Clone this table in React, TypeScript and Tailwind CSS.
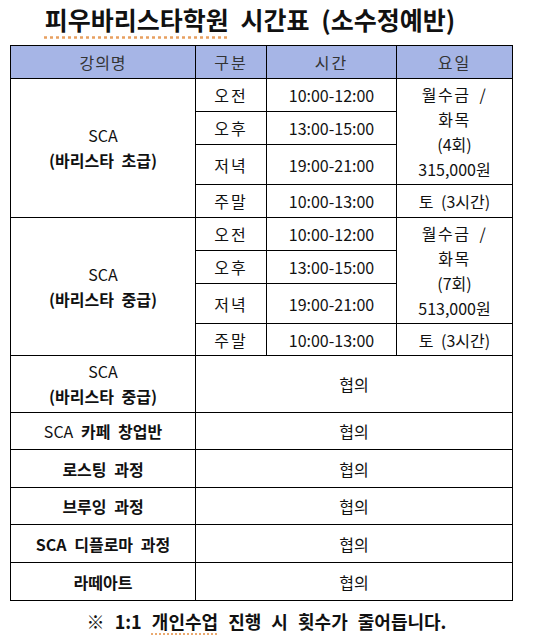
import React from 'react';

const font = { fontFamily: '"Malgun Gothic", "Noto Sans CJK KR", "Noto Sans", sans-serif' };

const cell = 'border border-black text-center align-middle p-0 leading-[20px] [word-spacing:4px]';

interface Slot {
  label: string;
  time: string;
  h: string;
}

const slots: Slot[] = [
  { label: '오전', time: '10:00-12:00', h: 'h-[33px]' },
  { label: '오후', time: '13:00-15:00', h: 'h-[33px]' },
  { label: '저녁', time: '19:00-21:00', h: 'h-[40px]' },
];

// one SCA course block: 4 rows, course name + days cells span the first 3 / 4
const CourseGroup: React.FC<{ level: string; count: string; price: string; last: string }> = ({
  level,
  count,
  price,
  last,
}) => (
  <>
    {slots.map((s, i) => (
      <tr key={s.label} className={s.h}>
        {i === 0 && (
          <td rowSpan={4} className={cell}>
            <div className="leading-[25px] [word-spacing:0]">SCA</div>
            <div className="font-bold leading-[25px]">(바리스타 {level})</div>
          </td>
        )}
        <td className={`${cell} tracking-[2px]`}>{s.label}</td>
        <td className={cell}>{s.time}</td>
        {i === 0 && (
          <td rowSpan={3} className={cell}>
            <div className="leading-[25px] tracking-[1.5px]">월수금 /</div>
            <div className="leading-[25px] tracking-[1.5px]">화목</div>
            <div className="leading-[25px]">({count})</div>
            <div className="leading-[25px]">{price}</div>
          </td>
        )}
      </tr>
    ))}
    <tr className={last}>
      <td className={`${cell} tracking-[2px]`}>주말</td>
      <td className={cell}>10:00-13:00</td>
      <td className={cell}>토 (3시간)</td>
    </tr>
  </>
);

const Row: React.FC<{ h: string; children: React.ReactNode }> = ({ h, children }) => (
  <tr className={h}>
    <td className={cell}>{children}</td>
    <td colSpan={3} className={cell}>협의</td>
  </tr>
);

export default function App() {
  return (
    <div className="w-[533px] h-[639px] bg-white text-[#111] overflow-hidden" style={font}>
      <h1 className="h-[45px] pr-[33px] pt-[2px] text-center text-[25px] font-bold text-[#111] leading-[34px] [word-spacing:6px]">
        <span className="underline decoration-dotted decoration-[#e8a060] underline-offset-[6px]">피우바리스타학원</span>{' '}
        시간표 (소수정예반)
      </h1>
      <table className="ml-[10px] w-[502px] border-collapse border-[1.5px] border-black text-[16px] table-fixed">
        <colgroup>
          <col className="w-[185px]" />
          <col className="w-[71px]" />
          <col className="w-[130px]" />
          <col className="w-[116px]" />
        </colgroup>
        <thead>
          <tr className="h-[33px] bg-[#a6b5e6] text-[#333]">
            <th className={`${cell} font-normal tracking-[1px]`}>강의명</th>
            <th className={`${cell} font-normal tracking-[2px]`}>구분</th>
            <th className={`${cell} font-normal tracking-[2px]`}>시간</th>
            <th className={`${cell} font-normal tracking-[2px]`}>요일</th>
          </tr>
        </thead>
        <tbody>
          <CourseGroup level="초급" count="4회" price="315,000원" last="h-[33px]" />
          <CourseGroup level="중급" count="7회" price="513,000원" last="h-[32px]" />
          <Row h="h-[57px]">
            <div className="leading-[25px] [word-spacing:0]">SCA</div>
            <div className="font-bold leading-[25px]">(바리스타 중급)</div>
          </Row>
          <Row h="h-[37px]">
            SCA <span className="font-bold">카페 창업반</span>
          </Row>
          <Row h="h-[38px]">
            <span className="font-bold">로스팅 과정</span>
          </Row>
          <Row h="h-[37px]">
            <span className="font-bold">브루잉 과정</span>
          </Row>
          <Row h="h-[38px]">
            <span className="font-bold">SCA 디플로마 과정</span>
          </Row>
          <Row h="h-[38px]">
            <span className="font-bold">라떼아트</span>
          </Row>
        </tbody>
      </table>
      <p className="mt-[7px] text-center text-[18px] font-bold text-[#111] [word-spacing:6px]">
        ※ 1:1{' '}
        <span className="underline decoration-dotted decoration-[#e8a060] underline-offset-[5px]">개인수업</span> 진행 시
        횟수가 줄어듭니다.
      </p>
    </div>
  );
}
